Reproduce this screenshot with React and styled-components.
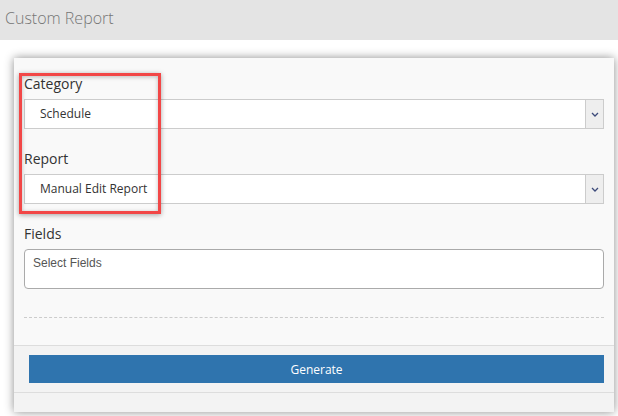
import React from 'react'
import styled, { createGlobalStyle } from 'styled-components'

const GlobalStyle = createGlobalStyle`
  html, body {
    margin: 0;
    padding: 0;
    background: #fff;
    font-family: 'Open Sans', 'Liberation Sans', sans-serif;
  }
  * { box-sizing: border-box; }
`

const Page = styled.div`
  width: 618px;
  height: 416px;
  overflow: hidden;
  background: #fff;
`

const Header = styled.div`
  height: 40px;
  background: #e4e4e4;
  display: flex;
  align-items: center;
  padding-left: 5px;
  padding-bottom: 4px;
  font-size: 16px;
  font-weight: 300;
  color: #767676;
`

const Body = styled.div`
  padding: 18px 5px 0 14px;
`

const Card = styled.div`
  position: relative;
  width: 600px;
  background: #f9f9f9;
  box-shadow: 0 0 9px rgba(0, 0, 0, 0.45);
`

const Form = styled.div`
  padding: 17px 10px 0 10px;
  display: flex;
  flex-direction: column;
`

const Label = styled.div`
  font-size: 14px;
  color: #333;
  line-height: 18px;
  margin-bottom: 6px;
`

const Group = styled.div`
  margin-bottom: ${(p) => p.$gap ?? 21}px;
`

const Select = styled.div`
  height: 30px;
  display: flex;
  background: #fff;
  border: 1px solid #ccc;
`

const SelectText = styled.div`
  flex: 1;
  display: flex;
  align-items: center;
  padding-left: 15px;
  padding-bottom: 2px;
  font-size: 12px;
  color: #333;
`

const Caret = styled.div`
  width: 18px;
  background: #eee;
  border-left: 1px solid #ccc;
  display: flex;
  align-items: center;
  justify-content: center;
`

const Multi = styled.div`
  height: 40px;
  background: #fff;
  border: 1px solid #aaa;
  border-radius: 4px;
  padding: 6px 8px;
  font-family: 'Liberation Sans', Arial, sans-serif;
  font-size: 12px;
  color: #555;
`

const Dashed = styled.div`
  margin-top: 28px;
  border-top: 1px dashed #ccc;
  height: 28px;
`

const Footer = styled.div`
  background: #f3f3f3;
  border-top: 1px solid #ddd;
  border-bottom: 1px solid #ddd;
  padding: 9px 10px 9px 15px;
`

const Button = styled.button`
  width: 100%;
  height: 28px;
  border: none;
  background: #2f74ae;
  color: #fff;
  font-family: 'Open Sans', sans-serif;
  font-size: 12px;
  display: flex;
  align-items: center;
  justify-content: center;
`

const CardBottom = styled.div`
  height: 19px;
  background: #f3f3f3;
`

const Highlight = styled.div`
  position: absolute;
  left: 5px;
  top: 15px;
  width: 142px;
  height: 141px;
  border: 3px solid #f24747;
  box-shadow: 0 1px 5px rgba(0, 0, 0, 0.35), inset 0 1px 4px rgba(0, 0, 0, 0.25);
  pointer-events: none;
`

const Chevron = () => (
  <svg width="8" height="5" viewBox="0 0 8 5">
    <polyline points="1,1 4,4 7,1" fill="none" stroke="#3c4a7a" strokeWidth="1.3" />
  </svg>
)

const Dropdown = ({ value }) => (
  <Select>
    <SelectText>{value}</SelectText>
    <Caret>
      <Chevron />
    </Caret>
  </Select>
)

export default function App() {
  return (
    <Page>
      <GlobalStyle />
      <Header>Custom Report</Header>
      <Body>
        <Card>
          <Form>
            <Group>
              <Label>Category</Label>
              <Dropdown value="Schedule" />
            </Group>
            <Group>
              <Label>Report</Label>
              <Dropdown value="Manual Edit Report" />
            </Group>
            <Group $gap={0}>
              <Label>Fields</Label>
              <Multi>Select Fields</Multi>
            </Group>
            <Dashed />
          </Form>
          <Footer>
            <Button>Generate</Button>
          </Footer>
          <CardBottom />
          <Highlight />
        </Card>
      </Body>
    </Page>
  )
}
